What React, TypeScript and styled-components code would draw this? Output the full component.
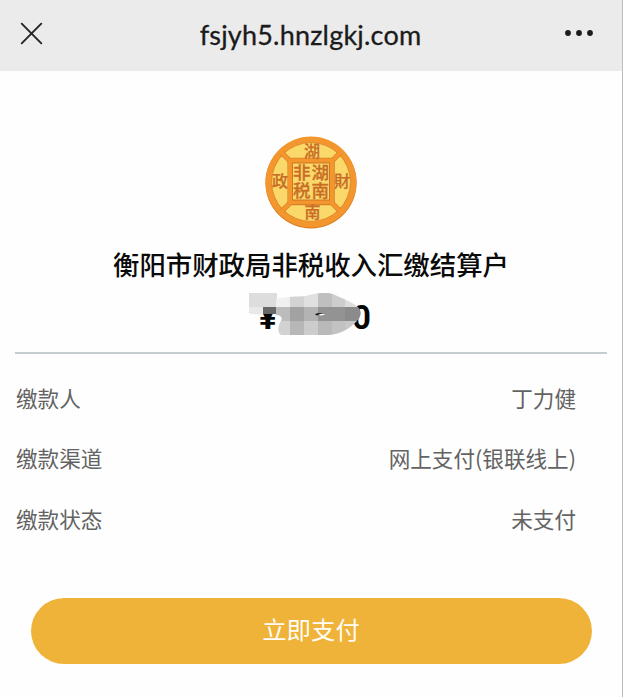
import React from 'react';
import styled, { createGlobalStyle } from 'styled-components';

const GlobalStyle = createGlobalStyle`
  * {
    box-sizing: border-box;
  }
  body {
    margin: 0;
    background: #fefefe;
    font-family: 'Noto Sans CJK SC', sans-serif;
  }
`;

const Page = styled.div`
  width: 100%;
  height: 697px;
  border-right: 1px solid #bdbdbd;
  background: #fefefe;
  overflow: hidden;
`;

const NavBar = styled.header`
  display: flex;
  align-items: center;
  justify-content: space-between;
  height: 70.5px;
  padding: 0 28px 4px 20px;
  background: #ebebeb;
`;

const NavIcon = styled.svg`
  display: block;
  flex-shrink: 0;
`;

const NavTitle = styled.h1`
  margin: 0;
  padding-top: 3px;
  padding-left: 14px;
  color: #1b1b1b;
  font-family: Lato, sans-serif;
  font-size: 27px;
  font-weight: 400;
  line-height: 34px;
  letter-spacing: 0.2px;
  -webkit-text-stroke: 0.3px #1b1b1b;
`;

const Payee = styled.section`
  display: flex;
  flex-direction: column;
  align-items: center;
  height: 283px;
  margin: 0 15px;
  padding-top: 65px;
  border-bottom: 2px solid #c5cdd0;
`;

const Seal = styled.svg`
  display: block;
  font-family: 'Noto Sans CJK SC', sans-serif;
`;

const PayeeName = styled.h2`
  margin: 15px 0 0;
  color: #0a0a0a;
  font-size: 26.4px;
  font-weight: 500;
  line-height: 40px;
  white-space: nowrap;
`;

const Amount = styled.div`
  position: relative;
  display: flex;
  justify-content: space-between;
  width: 112px;
  margin-top: 14px;
  margin-left: 8px;
  color: #050505;
  font-family: Roboto, sans-serif;
  font-size: 33px;
  font-weight: 700;
  line-height: 40px;
`;

const AmountMask = styled.svg`
  position: absolute;
  top: -5px;
  left: -10px;
`;

const Details = styled.dl`
  margin: 14px 0 0;
  padding: 0 46px 0 16px;
`;

const DetailRow = styled.div`
  display: flex;
  align-items: center;
  justify-content: space-between;
  height: 60.5px;
  color: #636363;
  font-size: 21.6px;
  line-height: 32px;
`;

const DetailLabel = styled.dt`
  margin: 0;
`;

const DetailValue = styled.dd`
  margin: 0;
`;

const PayButton = styled.button`
  display: block;
  width: 561px;
  height: 66px;
  margin: 48.5px 0 0 31px;
  padding: 0 1px 4px 0;
  border: 0;
  border-radius: 33px;
  background: #f0b339;
  color: #fffdf5;
  font-family: inherit;
  font-size: 24.4px;
  line-height: 36px;
`;

const details = [
  { label: '缴款人', value: '丁力健' },
  { label: '缴款渠道', value: '网上支付(银联线上)' },
  { label: '缴款状态', value: '未支付' },
];

const ringChars = [
  { char: '湖', x: 47, y: 20.5 },
  { char: '政', x: 15, y: 51 },
  { char: '財', x: 77, y: 51 },
  { char: '南', x: 47.5, y: 82 },
];

const coreChars = [
  { char: '非', x: 36.8, y: 43 },
  { char: '湖', x: 55.2, y: 43 },
  { char: '税', x: 36.8, y: 61 },
  { char: '南', x: 55.2, y: 61 },
];

// x, y, width, height, fill
const tiles: [number, number, number, number, string][] = [
  [27, 0, 14, 14, '#f0f0f0'],
  [41, 0, 14, 14, '#d3d3d3'],
  [55, 0, 14, 14, '#e0e0e0'],
  [69, 0, 14, 14, '#bfbfbf'],
  [83, 0, 13, 14, '#cdcdcd'],
  [96, 0, 18, 14, '#dddddd'],
  [27, 14, 14, 14, '#bcbcbc'],
  [41, 14, 14, 14, '#a2a2a2'],
  [55, 14, 14, 14, '#b3b3b3'],
  [69, 14, 27, 14, '#939393'],
  [96, 14, 18, 14, '#8b8b8b'],
  [27, 28, 14, 14, '#d2d2d2'],
  [41, 28, 14, 14, '#b7b7b7'],
  [55, 28, 14, 14, '#cccccc'],
  [69, 28, 14, 14, '#b9b9b9'],
  [83, 28, 13, 14, '#c2c2c2'],
  [96, 28, 18, 14, '#c8c8c8'],
];

const SealLogo = () => (
  <Seal width="92" height="93" viewBox="0 0 92 93">
    <circle cx="46" cy="46.8" r="45.6" fill="#d97a20" />
    <circle cx="46" cy="46" r="45.4" fill="#f2962d" />
    <circle cx="46" cy="46" r="39.4" fill="#fad869" stroke="#d9842a" strokeWidth="0.8" />
    <path d="M17 17L26 26M75 17L66 26M17 75L26 66M75 75L66 66" stroke="#cf7725" strokeWidth="5.2" />
    <rect x="22.5" y="21.8" width="47.2" height="47.4" fill="#cf7725" />
    <path d="M16 16L26 26M76 16L66 26M16 76L26 66M76 76L66 66" stroke="#f2962d" strokeWidth="4.2" />
    <rect x="23" y="22.3" width="46" height="46" fill="#f2962d" />
    <rect x="27.5" y="27" width="37" height="37" fill="#fad869" stroke="#cb6f1f" strokeWidth="0.9" />
    <g fill="#c96d26" stroke="#c96d26" strokeWidth="0.25" fontSize="16" fontWeight="500" textAnchor="middle">
      {ringChars.map(({ char, x, y }) => (
        <text key={char} x={x} y={y}>{char}</text>
      ))}
    </g>
    <g fill="#c96d26" stroke="#c96d26" strokeWidth="0.3" fontSize="17.5" fontWeight="500" textAnchor="middle">
      {coreChars.map(({ char, x, y }) => (
        <text key={char} x={x} y={y}>{char}</text>
      ))}
    </g>
  </Seal>
);

const MaskedAmount = () => (
  <Amount>
    <span>¥</span>
    <span>0</span>
    <AmountMask width="120" height="44" viewBox="0 0 120 44">
      <defs>
        <clipPath id="smudge">
          <path d="M27 6C38 3 48 4 57 3C66 0 77-1 84 1C94 6 104 9 110 15C113 20 112 24 107 29C100 36 92 41 80 42L32 42C28 39 29 32 32 28C34 24 31 22 27 22Z" />
        </clipPath>
      </defs>
      <path d="M0 0H28V20H14V21Q7 22 0 20Z" fill="#dddddd" />
      <path d="M0 14H14V21Q7 22 0 19Z" fill="#e9e9e9" />
      <path d="M14 14H28V21H14Z" fill="#686868" />
      <g clipPath="url(#smudge)">
        {tiles.map(([x, y, width, height, fill]) => (
          <rect key={`${x}-${y}`} x={x} y={y} width={width} height={height} fill={fill} />
        ))}
      </g>
      <path d="M66 21.5Q69 19 75 21L68 22.5Z" fill="#1d1d1d" />
      <path d="M69 22Q73 20 76 21.5Q73 23 69 22Z" fill="#f5f5f5" />
    </AmountMask>
  </Amount>
);

const App = () => {
  return (
    <>
      <GlobalStyle />
      <Page>
        <NavBar>
          <NavIcon width="23" height="23" viewBox="0 0 23 23" fill="none" stroke="#242424" strokeWidth="1.9" strokeLinecap="round">
            <path d="M1.7 1.7L21.3 21.3M21.3 1.7L1.7 21.3" />
          </NavIcon>
          <NavTitle>fsjyh5.hnzlgkj.com</NavTitle>
          <NavIcon width="30" height="8" viewBox="0 0 30 8" fill="#1b1b1b">
            <circle cx="4" cy="4" r="2.9" />
            <circle cx="15" cy="4" r="2.9" />
            <circle cx="26" cy="4" r="2.9" />
          </NavIcon>
        </NavBar>
        <Payee>
          <SealLogo />
          <PayeeName>衡阳市财政局非税收入汇缴结算户</PayeeName>
          <MaskedAmount />
        </Payee>
        <Details>
          {details.map(({ label, value }) => (
            <DetailRow key={label}>
              <DetailLabel>{label}</DetailLabel>
              <DetailValue>{value}</DetailValue>
            </DetailRow>
          ))}
        </Details>
        <PayButton type="button">立即支付</PayButton>
      </Page>
    </>
  );
};

export default App;
